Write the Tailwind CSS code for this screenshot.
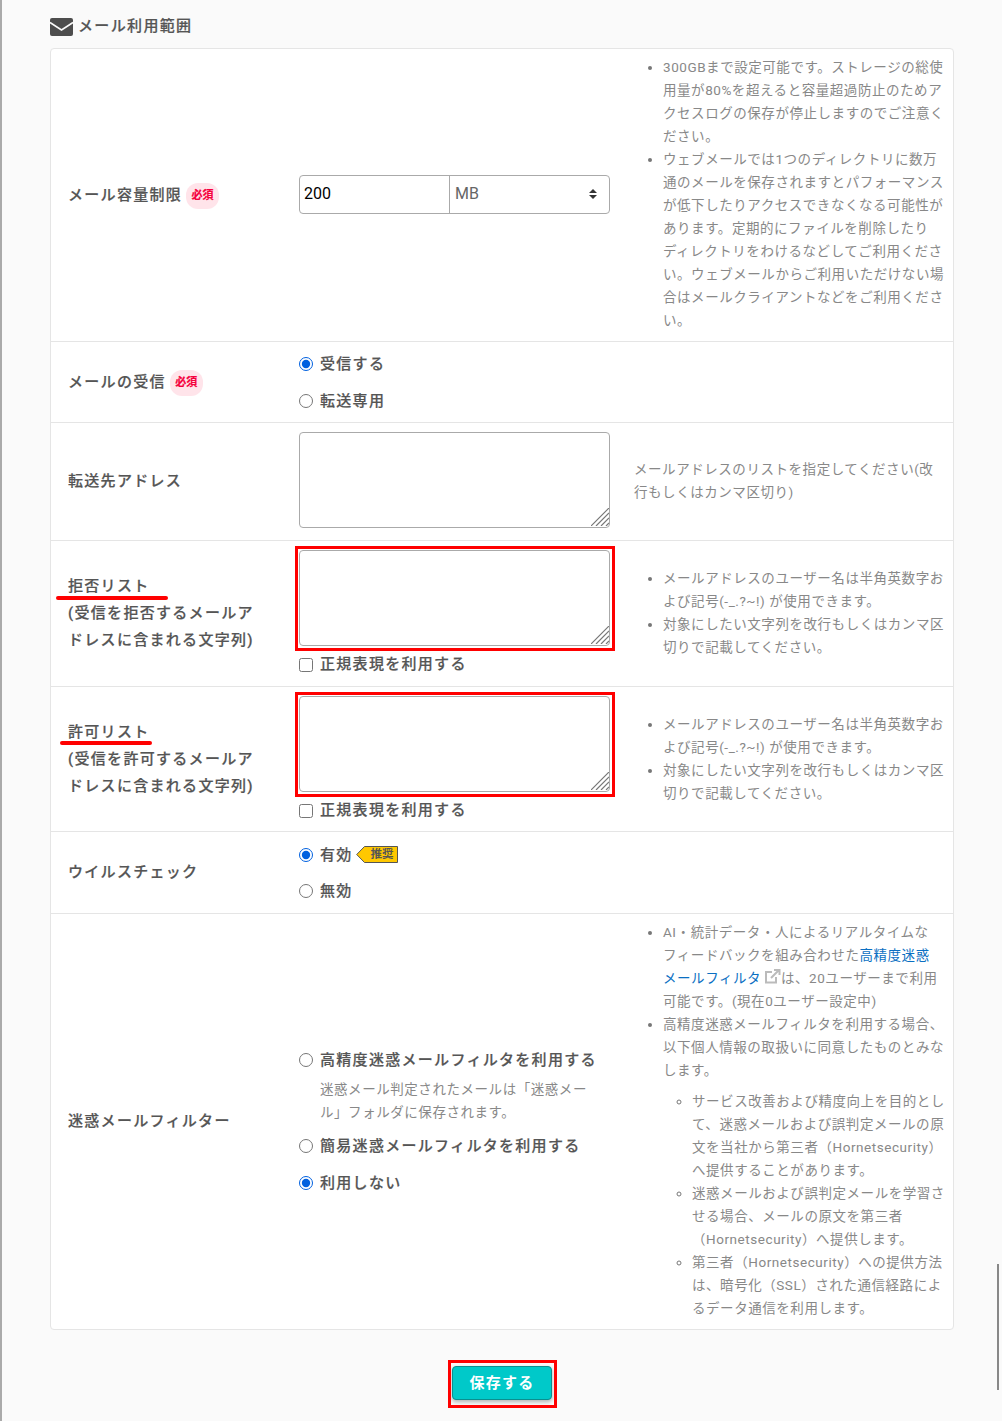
<!DOCTYPE html>
<html lang="ja">

<head>
  <meta charset="UTF-8" />
  <title>メール利用範囲</title>
  <script src="https://cdn.jsdelivr.net/npm/@tailwindcss/browser@4"></script>
</head>

<body class="relative h-screen overflow-hidden bg-[#fafafa] pl-[50px] pr-[48px] font-['Roboto','Noto_Sans_CJK_JP',sans-serif] text-[15px] text-[#555]">
  <!-- page edge + scrollbar -->
  <div class="absolute left-0 top-0 h-full w-[2px] bg-[#aaa]"></div>
  <div class="absolute right-[3px] top-[1264px] h-[126px] w-[2px] bg-[#888]"></div>

  <h2 class="flex h-[48px] items-center gap-[5px] pt-[5px] font-medium tracking-[1.35px] [-webkit-text-stroke:0.2px]">
    <svg class="h-[18px] w-[23px]" viewBox="0 0 23 18">
      <rect width="23" height="18" rx="2" fill="#4d4d4d" />
      <path d="M0 4.500l11.500 7.500L23 4.500" fill="none" stroke="#fafafa" stroke-width="1.6" />
    </svg>
    メール利用範囲
  </h2>

  <div class="rounded-[4px] border border-[#e5e5e5] bg-white">
    <!-- mail quota -->
    <div class="flex h-[293px] items-center border-b border-[#e5e5e5]">
      <div class="flex w-[248px] items-center gap-[4px] pl-[17px] font-medium tracking-[1.3px] [-webkit-text-stroke:0.2px]">
        メール容量制限
        <span class="mt-[2px] flex h-[26px] w-[33px] items-center justify-center rounded-[12px] bg-[#ffe4ea] text-[11px] font-bold tracking-normal text-[#f5003d]">必須</span>
      </div>
      <div class="mb-[2px] flex h-[39px] w-[311px] rounded-[4px] border border-[#aaa]">
        <input type="text" value="200" class="w-[150px] rounded-l-[4px] border-r border-[#aaa] px-[4px] text-[16px] text-black" />
        <div class="flex flex-1 items-center justify-between pl-[5px] pr-[12px] text-[16px] text-[#666]">
          MB
          <svg class="h-[10px] w-[8px]" viewBox="0 0 8 10"><path d="M4 0l4 4H0zM4 10L0 6h8z" fill="#333" /></svg>
        </div>
      </div>
      <ul class="mb-[2px] ml-[24px] list-disc pl-[29px] text-[13.5px] leading-[23px] tracking-[0.55px] whitespace-nowrap text-[#888] marker:text-[#777]">
        <li>300GBまで設定可能です。ストレージの総使<br>用量が80%を超えると容量超過防止のためア<br>クセスログの保存が停止しますのでご注意く<br>ださい。</li>
        <li>ウェブメールでは1つのディレクトリに数万<br>通のメールを保存されますとパフォーマンス<br>が低下したりアクセスできなくなる可能性が<br>あります。定期的にファイルを削除したり<br>ディレクトリをわけるなどしてご利用くださ<br>い。ウェブメールからご利用いただけない場<br>合はメールクライアントなどをご利用くださ<br>い。</li>
      </ul>
    </div>

    <!-- receive -->
    <div class="flex h-[81px] items-center border-b border-[#e5e5e5]">
      <div class="flex w-[248px] items-center gap-[4px] pl-[17px] font-medium tracking-[1.3px] [-webkit-text-stroke:0.2px]">
        メールの受信
        <span class="mt-[2px] flex h-[26px] w-[33px] items-center justify-center rounded-[12px] bg-[#ffe4ea] text-[11px] font-bold tracking-normal text-[#f5003d]">必須</span>
      </div>
      <div class="mt-[2px] flex flex-col gap-[10px] font-medium tracking-[1.3px] [-webkit-text-stroke:0.2px]">
        <label class="flex h-[27px] items-center gap-[7px]"><input type="radio" name="recv" checked class="-mt-[2px] h-[14px] w-[14px] accent-[#0060df]" />受信する</label>
        <label class="flex h-[27px] items-center gap-[7px]"><input type="radio" name="recv" class="-mt-[2px] h-[14px] w-[14px] accent-[#0060df]" />転送専用</label>
      </div>
    </div>

    <!-- forward -->
    <div class="flex h-[118px] items-center border-b border-[#e5e5e5]">
      <div class="w-[248px] pl-[17px] font-medium tracking-[1.3px] [-webkit-text-stroke:0.2px]">転送先アドレス</div>
      <div class="relative mb-[4px] h-[96px] w-[311px]">
        <textarea class="block h-full w-full resize-none rounded-[4px] border border-[#aaa]"></textarea>
        <svg class="pointer-events-none absolute bottom-[2px] right-[1px] h-[18px] w-[18px]" viewBox="0 0 18 18"><path d="M18 0L0 18M18 5L5 18M18 10L10 18M18 15l-3 3" stroke="#777" stroke-width="1.2" /></svg>
      </div>
      <p class="mb-[2px] ml-[24px] text-[13.5px] leading-[23px] tracking-[0.55px] whitespace-nowrap text-[#888]">メールアドレスのリストを指定してください(改<br>行もしくはカンマ区切り)</p>
    </div>

    <!-- deny list -->
    <div class="flex h-[146px] items-center border-b border-[#e5e5e5]">
      <div class="w-[248px] pl-[17px] font-medium leading-[27px] tracking-[1.3px] whitespace-nowrap [-webkit-text-stroke:0.2px]">拒否リスト<br>(受信を拒否するメールア<br>ドレスに含まれる文字列)</div>
      <div class="w-[311px] self-start pt-[9px]">
        <div class="relative h-[96px]">
          <textarea class="block h-full w-full resize-none rounded-[4px] border border-[#aaa]"></textarea>
          <svg class="pointer-events-none absolute bottom-[2px] right-[1px] h-[18px] w-[18px]" viewBox="0 0 18 18"><path d="M18 0L0 18M18 5L5 18M18 10L10 18M18 15l-3 3" stroke="#777" stroke-width="1.2" /></svg>
        </div>
        <label class="mt-[5px] flex h-[27px] items-center gap-[7px] font-medium tracking-[1.3px] [-webkit-text-stroke:0.2px]"><input type="checkbox" class="h-[14px] w-[14px]" />正規表現を利用する</label>
      </div>
      <ul class="mb-[2px] ml-[24px] list-disc pl-[29px] text-[13.5px] leading-[23px] tracking-[0.55px] whitespace-nowrap text-[#888] marker:text-[#777]">
        <li>メールアドレスのユーザー名は半角英数字お<br>よび記号(-_.?~!) が使用できます。</li>
        <li>対象にしたい文字列を改行もしくはカンマ区<br>切りで記載してください。</li>
      </ul>
    </div>

    <!-- allow list -->
    <div class="flex h-[145px] items-center border-b border-[#e5e5e5]">
      <div class="w-[248px] pl-[17px] font-medium leading-[27px] tracking-[1.3px] whitespace-nowrap [-webkit-text-stroke:0.2px]">許可リスト<br>(受信を許可するメールア<br>ドレスに含まれる文字列)</div>
      <div class="w-[311px] self-start pt-[9px]">
        <div class="relative h-[96px]">
          <textarea class="block h-full w-full resize-none rounded-[4px] border border-[#aaa]"></textarea>
          <svg class="pointer-events-none absolute bottom-[2px] right-[1px] h-[18px] w-[18px]" viewBox="0 0 18 18"><path d="M18 0L0 18M18 5L5 18M18 10L10 18M18 15l-3 3" stroke="#777" stroke-width="1.2" /></svg>
        </div>
        <label class="mt-[5px] flex h-[27px] items-center gap-[7px] font-medium tracking-[1.3px] [-webkit-text-stroke:0.2px]"><input type="checkbox" class="h-[14px] w-[14px]" />正規表現を利用する</label>
      </div>
      <ul class="ml-[24px] list-disc pl-[29px] text-[13.5px] leading-[23px] tracking-[0.55px] whitespace-nowrap text-[#888] marker:text-[#777]">
        <li>メールアドレスのユーザー名は半角英数字お<br>よび記号(-_.?~!) が使用できます。</li>
        <li>対象にしたい文字列を改行もしくはカンマ区<br>切りで記載してください。</li>
      </ul>
    </div>

    <!-- virus check -->
    <div class="flex h-[82px] items-center border-b border-[#e5e5e5]">
      <div class="w-[248px] pl-[17px] font-medium tracking-[1.3px] [-webkit-text-stroke:0.2px]">ウイルスチェック</div>
      <div class="mt-[2px] flex flex-col gap-[9px] font-medium tracking-[1.3px] [-webkit-text-stroke:0.2px]">
        <label class="flex h-[27px] items-center gap-[7px]"><input type="radio" name="virus" checked class="-mt-[2px] h-[14px] w-[14px] accent-[#0060df]" />
          <span>有効</span>
          <span class="relative -ml-[4px] -mt-[2px] flex h-[17px] w-[42px] items-center justify-end pr-[4px] text-[11.5px] font-bold tracking-normal [-webkit-text-stroke:0]">
            <svg class="absolute inset-0 h-full w-full" viewBox="0 0 42 17"><path d="M.7 8.500L8.500.5h33v16h-33z" fill="#ffc800" stroke="#555" /></svg>
            <span class="relative">推奨</span>
          </span>
        </label>
        <label class="flex h-[27px] items-center gap-[7px]"><input type="radio" name="virus" class="-mt-[2px] h-[14px] w-[14px] accent-[#0060df]" />無効</label>
      </div>
    </div>

    <!-- spam filter -->
    <div class="flex h-[415px] items-center">
      <div class="w-[248px] pl-[17px] font-medium tracking-[1.3px] [-webkit-text-stroke:0.2px]">迷惑メールフィルター</div>
      <div class="w-[311px] font-medium tracking-[1.3px] [-webkit-text-stroke:0.2px]">
        <label class="flex h-[27px] items-center gap-[7px]"><input type="radio" name="spam" class="h-[14px] w-[14px] accent-[#0060df]" />高精度迷惑メールフィルタを利用する</label>
        <p class="mt-[4px] pl-[21px] text-[13.5px] font-normal leading-[23px] tracking-[0.55px] whitespace-nowrap text-[#888] [-webkit-text-stroke:0]">迷惑メール判定されたメールは「迷惑メー<br>ル」フォルダに保存されます。</p>
        <label class="mt-[9px] flex h-[27px] items-center gap-[7px]"><input type="radio" name="spam" class="h-[14px] w-[14px] accent-[#0060df]" />簡易迷惑メールフィルタを利用する</label>
        <label class="mt-[10px] flex h-[27px] items-center gap-[7px]"><input type="radio" name="spam" checked class="h-[14px] w-[14px] accent-[#0060df]" />利用しない</label>
      </div>
      <ul class="mb-[2px] ml-[24px] list-disc pl-[29px] text-[13.5px] leading-[23px] tracking-[0.55px] whitespace-nowrap text-[#888] marker:text-[#777]">
        <li>AI・統計データ・人によるリアルタイムな<br>フィードバックを組み合わせた<span class="text-[#0a6fc2]">高精度迷惑<br>メールフィルタ</span>
          <svg class="inline h-[15px] w-[16px] align-[-1px]" viewBox="0 0 16 15"><path d="M11 8v5.500H1V3h6" fill="none" stroke="#bbb" stroke-width="2" /><path d="M6 9l8-8M9 1h5.500v5" fill="none" stroke="#bbb" stroke-width="2" /></svg>は、20ユーザーまで利用<br>可能です。(現在0ユーザー設定中)</li>
        <li>高精度迷惑メールフィルタを利用する場合、<br>以下個人情報の取扱いに同意したものとみな<br>します。
          <ul class="mt-[8px] list-[circle] pl-[29px]">
            <li>サービス改善および精度向上を目的とし<br>て、迷惑メールおよび誤判定メールの原<br>文を当社から第三者（Hornetsecurity）<br>へ提供することがあります。</li>
            <li>迷惑メールおよび誤判定メールを学習さ<br>せる場合、メールの原文を第三者<br>（Hornetsecurity）へ提供します。</li>
            <li>第三者（Hornetsecurity）への提供方法<br>は、暗号化（SSL）された通信経路によ<br>るデータ通信を利用します。</li>
          </ul>
        </li>
      </ul>
    </div>
  </div>

  <div class="mt-[36px] flex justify-center">
    <button class="h-[34px] w-[100px] rounded-[4px] border border-[#0a8f8f] bg-[#00c9c9] font-bold tracking-[1.3px] text-white shadow-[0_2px_4px_rgba(0,0,0,0.3)]">保存する</button>
  </div>

  <!-- red annotations -->
  <div class="absolute left-[295px] top-[546px] h-[105px] w-[320px] border-[3px] border-[#f00]"></div>
  <div class="absolute left-[295px] top-[692px] h-[105px] w-[320px] border-[3px] border-[#f00]"></div>
  <div class="absolute left-[448px] top-[1360px] h-[48px] w-[109px] border-[3px] border-[#f00]"></div>
  <div class="absolute left-[56px] top-[596px] h-[4px] w-[112px] rounded-full bg-[#f00]"></div>
  <div class="absolute left-[60px] top-[741px] h-[4px] w-[92px] rounded-full bg-[#f00]"></div>
</body>

</html>
